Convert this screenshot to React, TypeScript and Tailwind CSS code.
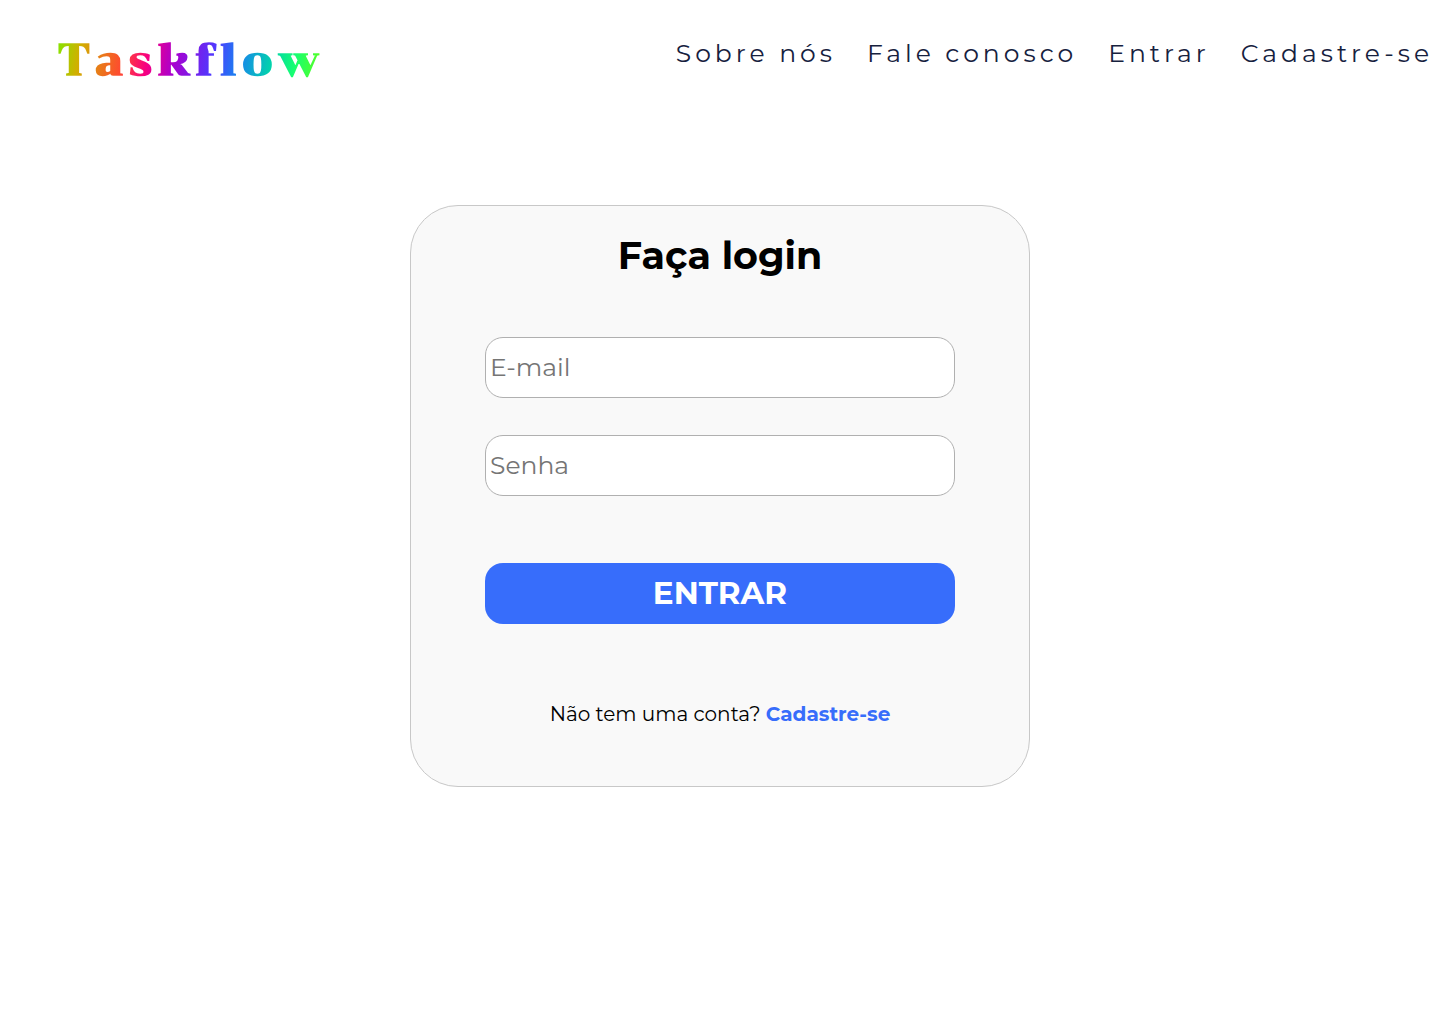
import { useState } from "react";
import type { InputHTMLAttributes } from "react";

const navLinks = [
  { label: "Sobre nós", href: "#sobre" },
  { label: "Fale conosco", href: "#contato" },
  { label: "Entrar", href: "#entrar" },
  { label: "Cadastre-se", href: "#cadastro" },
];

function Logo() {
  return (
    <a
      href="#inicio"
      className="bg-[linear-gradient(100deg,#80e800_0%,#d0b000_9%,#ff4a30_25%,#f80080_34%,#a800d0_44%,#5038ff_58%,#1a80f0_67%,#00d8a8_80%,#18ff70_88%,#58ff20_97%)] bg-clip-text font-[Chonburi,'DejaVu_Serif',serif] text-[44px] leading-[56px] font-bold tracking-[5px] text-transparent"
    >
      Taskflow
    </a>
  );
}

function Header() {
  return (
    <header className="flex items-start justify-between pt-8 pr-[7px] pl-[58px]">
      <Logo />
      <nav className="pt-[5px]">
        <ul className="flex gap-[31px]">
          {navLinks.map((link) => (
            <li key={link.href}>
              <a href={link.href} className="text-[25px] leading-[32px] tracking-[4px] whitespace-nowrap text-[#16213e]">
                {link.label}
              </a>
            </li>
          ))}
        </ul>
      </nav>
    </header>
  );
}

type FieldProps = InputHTMLAttributes<HTMLInputElement> & { id: string; label: string };

function Field({ id, label, ...props }: FieldProps) {
  return (
    <input
      id={id}
      aria-label={label}
      placeholder={label}
      className="block h-[61px] w-full rounded-[18px] border border-[#b0b0b0] bg-white px-1 pb-0.5 text-[25px] text-black placeholder:text-[#757575]"
      {...props}
    />
  );
}

function LoginCard() {
  const [email, setEmail] = useState("");
  const [password, setPassword] = useState("");

  return (
    <form
      onSubmit={(event) => event.preventDefault()}
      className="w-full max-w-[620px] rounded-[48px] border border-[#c8c8c8] bg-[#f9f9f9] px-[74px] pt-[26px] pb-14"
    >
      <h1 className="text-center text-[38px] leading-[48px] font-bold text-black">Faça login</h1>
      <div className="mt-[57px] flex flex-col gap-[37px]">
        <Field id="email" label="E-mail" type="email" value={email} onChange={(e) => setEmail(e.target.value)} />
        <Field id="senha" label="Senha" type="password" value={password} onChange={(e) => setPassword(e.target.value)} />
      </div>
      <button
        type="submit"
        className="mt-[67px] h-[61px] w-full rounded-[18px] bg-[#376dfb] text-[31px] font-bold text-white"
      >
        ENTRAR
      </button>
      <p className="mt-[74px] text-center text-[20px] leading-[32px] text-black">
        Não tem uma conta?{" "}
        <a href="#cadastro" className="font-bold text-[#376dfb]">
          Cadastre-se
        </a>
      </p>
    </form>
  );
}

export default function App() {
  return (
    <div className="min-h-screen bg-white font-[Montserrat,Inter,sans-serif]">
      <Header />
      <main className="flex justify-center px-4 pt-[117px] pb-16">
        <LoginCard />
      </main>
    </div>
  );
}
